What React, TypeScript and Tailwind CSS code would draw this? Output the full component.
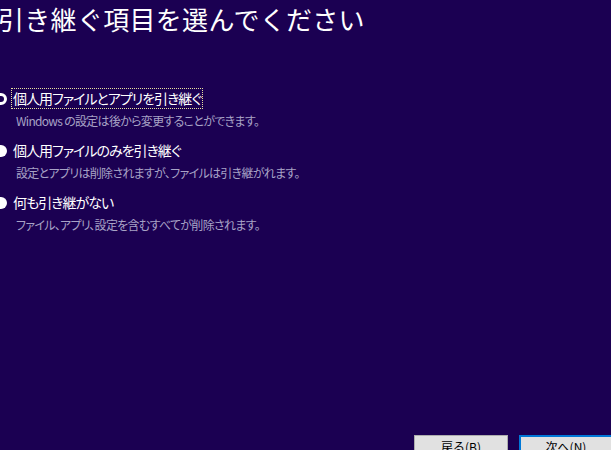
import React from "react";

const options = [
  {
    label: "個人用ファイルとアプリを引き継ぐ",
    desc: "Windows の設定は後から変更することができます。",
    selected: true,
  },
  {
    label: "個人用ファイルのみを引き継ぐ",
    desc: "設定とアプリは削除されますが、ファイルは引き継がれます。",
    selected: false,
  },
  {
    label: "何も引き継がない",
    desc: "ファイル、アプリ、設定を含むすべてが削除されます。",
    selected: false,
  },
];

const font = { fontFamily: '"Noto Sans CJK JP", "Noto Sans", sans-serif' };

export default function App() {
  return (
    <div
      className="flex h-[450px] w-[611px] flex-col overflow-hidden bg-[#1b0052] text-white"
      style={font}
    >
      <h1 className="-ml-[2px] mt-[-1px] h-[40px] text-[26px] leading-[40px] font-normal tracking-[0.3px] whitespace-nowrap">
        引き継ぐ項目を選んでください
      </h1>

      <div className="mt-[50px] flex flex-col gap-[12px]">
        {options.map((o) => (
          <div key={o.label} className="flex flex-col">
            <div className="flex items-center">
              <span
                className={`-ml-[5px] mr-[5px] h-[12px] w-[12px] shrink-0 rounded-full ${
                  o.selected ? "border-[3px] border-white bg-[#1b0052]" : "bg-white"
                }`}
              />
              <span
                className={`px-[1px] text-[14px] leading-[19px] tracking-[-1px] whitespace-nowrap [font-feature-settings:'palt'] ${
                  o.selected ? "outline-1 outline-dotted outline-[#e8e0a0]" : ""
                }`}
              >
                {o.label}
              </span>
            </div>
            <p className="mt-[5px] ml-[16px] text-[12px] leading-[16px] tracking-[-0.7px] text-[#a8a3c6] whitespace-nowrap [font-feature-settings:'palt']">
              {o.desc}
            </p>
          </div>
        ))}
      </div>

      <div className="mt-auto flex justify-end gap-[11px]">
        <button className="-mb-[9px] h-[24px] w-[94px] border border-[#adadad] bg-[#e1e1e1] text-[12px] leading-[20px] text-black">
          戻る(B)
        </button>
        <button className="-mb-[9px] -mr-[2px] h-[24px] w-[94px] border-2 border-[#0078d7] bg-[#e1e1e1] text-[12px] leading-[18px] text-black">
          次へ(N)
        </button>
      </div>
    </div>
  );
}
